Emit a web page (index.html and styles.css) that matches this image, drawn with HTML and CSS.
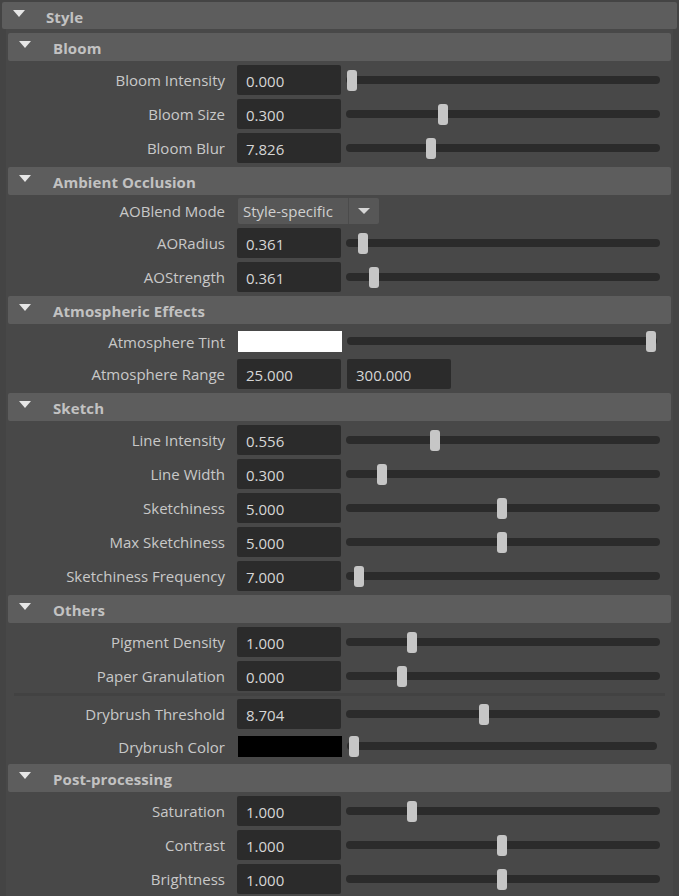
FILE: index.html
```html
<!DOCTYPE html>
<html>
<head>
<meta charset="utf-8">
<link rel="stylesheet" href="styles.css">
</head>
<body>
<div class="panel">
  <div class="hdr top"><span class="tri"></span><span class="ht">Style</span></div>
  <div class="body">
    <div class="hdr"><span class="tri"></span><span class="ht">Bloom</span></div>
    <div class="row"><span class="lbl">Bloom Intensity</span><span class="inp">0.000</span><div class="sl"><div class="track"></div><div class="knob" style="left:1px"></div></div></div>
    <div class="row"><span class="lbl">Bloom Size</span><span class="inp">0.300</span><div class="sl"><div class="track"></div><div class="knob" style="left:92px"></div></div></div>
    <div class="row"><span class="lbl">Bloom Blur</span><span class="inp">7.826</span><div class="sl"><div class="track"></div><div class="knob" style="left:80px"></div></div></div>

    <div class="hdr"><span class="tri"></span><span class="ht">Ambient Occlusion</span></div>
    <div class="row drow"><span class="lbl">AOBlend Mode</span><div class="dd"><span class="ddv">Style-specific</span><span class="dda"><span class="ddt"></span></span></div></div>
    <div class="row"><span class="lbl">AORadius</span><span class="inp">0.361</span><div class="sl"><div class="track"></div><div class="knob" style="left:12px"></div></div></div>
    <div class="row"><span class="lbl">AOStrength</span><span class="inp">0.361</span><div class="sl"><div class="track"></div><div class="knob" style="left:23px"></div></div></div>

    <div class="hdr"><span class="tri"></span><span class="ht">Atmospheric Effects</span></div>
    <div class="row crow"><span class="lbl">Atmosphere Tint</span><span class="sw white"></span><div class="sl csl"><div class="track"></div><div class="knob" style="left:299px"></div></div></div>
    <div class="row"><span class="lbl">Atmosphere Range</span><span class="inp">25.000</span><span class="inp second">300.000</span></div>

    <div class="hdr"><span class="tri"></span><span class="ht">Sketch</span></div>
    <div class="row"><span class="lbl">Line Intensity</span><span class="inp">0.556</span><div class="sl"><div class="track"></div><div class="knob" style="left:84px"></div></div></div>
    <div class="row"><span class="lbl">Line Width</span><span class="inp">0.300</span><div class="sl"><div class="track"></div><div class="knob" style="left:31px"></div></div></div>
    <div class="row"><span class="lbl">Sketchiness</span><span class="inp">5.000</span><div class="sl"><div class="track"></div><div class="knob" style="left:151px"></div></div></div>
    <div class="row"><span class="lbl">Max Sketchiness</span><span class="inp">5.000</span><div class="sl"><div class="track"></div><div class="knob" style="left:151px"></div></div></div>
    <div class="row"><span class="lbl">Sketchiness Frequency</span><span class="inp">7.000</span><div class="sl"><div class="track"></div><div class="knob" style="left:8px"></div></div></div>

    <div class="hdr"><span class="tri"></span><span class="ht">Others</span></div>
    <div class="row"><span class="lbl">Pigment Density</span><span class="inp">1.000</span><div class="sl"><div class="track"></div><div class="knob" style="left:61px"></div></div></div>
    <div class="row"><span class="lbl">Paper Granulation</span><span class="inp">0.000</span><div class="sl"><div class="track"></div><div class="knob" style="left:51px"></div></div></div>
    <div class="sep"></div>
    <div class="row"><span class="lbl">Drybrush Threshold</span><span class="inp">8.704</span><div class="sl"><div class="track"></div><div class="knob" style="left:133px"></div></div></div>
    <div class="row crow"><span class="lbl">Drybrush Color</span><span class="sw black"></span><div class="sl csl"><div class="track"></div><div class="knob" style="left:2px"></div></div></div>

    <div class="hdr"><span class="tri"></span><span class="ht">Post-processing</span></div>
    <div class="row"><span class="lbl">Saturation</span><span class="inp">1.000</span><div class="sl"><div class="track"></div><div class="knob" style="left:61px"></div></div></div>
    <div class="row"><span class="lbl">Contrast</span><span class="inp">1.000</span><div class="sl"><div class="track"></div><div class="knob" style="left:151px"></div></div></div>
    <div class="row"><span class="lbl">Brightness</span><span class="inp">1.000</span><div class="sl"><div class="track"></div><div class="knob" style="left:151px"></div></div></div>
  </div>
</div>
</body>
</html>
```
FILE: styles.css
```css
html, body {
  margin: 0;
  padding: 0;
  background: #444444;
  height: 896px;
  overflow: hidden;
}
.panel {
  font-family: "Open Sans", "Noto Sans", sans-serif;
  font-size: 15px;
  color: #c8c8c8;
  padding-top: 2px;
}
.hdr {
  height: 28px;
  background: #5d5d5d;
  border-radius: 2px;
  display: flex;
  align-items: center;
  position: relative;
  flex-shrink: 0;
}
.hdr.top {
  height: 27px;
  margin: 0 2px;
}
.tri {
  width: 0;
  height: 0;
  border-left: 6.5px solid transparent;
  border-right: 6.5px solid transparent;
  border-top: 7px solid #e6e6e6;
  margin-left: 11px;
  margin-top: -5px;
}
.ht {
  font-weight: bold;
  color: #c2c2c2;
  margin-left: 21px;
  padding-top: 2px;
  letter-spacing: 0.1px;
}
.hdr:not(.top) .ht { margin-left: 22px; }
.body {
  margin: 0 6px;
  background: #484848;
  padding: 4px 2px 0;
  display: flex;
  flex-direction: column;
  gap: 4px;
  height: 880px;
}
.row {
  height: 30px;
  display: flex;
  align-items: center;
  flex-shrink: 0;
}
.lbl {
  width: 217px;
  text-align: right;
  white-space: nowrap;
  margin-right: 12px;
}
.inp {
  width: 104px;
  height: 30px;
  box-sizing: border-box;
  background: #2b2b2b;
  border-radius: 2px;
  padding-left: 9px;
  padding-top: 1px;
  line-height: 30px;
  color: #d6d6d6;
  flex-shrink: 0;
}
.inp.second { margin-left: 6px; }
.sl {
  flex: 1;
  position: relative;
  height: 21px;
  margin-left: 5px;
  margin-right: 11px;
}
.track {
  position: absolute;
  left: 0;
  right: 0;
  top: 6px;
  height: 8px;
  background: #2b2b2b;
  border-radius: 4px;
}
.knob {
  position: absolute;
  top: 0;
  width: 10px;
  height: 21px;
  background: #c6c6c6;
  border-radius: 3px;
}
.crow { height: 27px; }
.sw {
  width: 104px;
  height: 21px;
  margin-left: 1px;
  flex-shrink: 0;
}
.sw.white { background: #ffffff; }
.sw.black { background: #000000; }
.csl { margin-left: 5px; margin-right: 14px; }
.drow {
  height: 26px;
  margin-top: -1px;
}
.dd {
  display: flex;
  height: 26px;
  margin-left: 1px;
  background: #575757;
  border-radius: 2px;
}
.ddv {
  width: 111px;
  box-sizing: border-box;
  padding-left: 5px;
  line-height: 26px;
  color: #d0d0d0;
  border-right: 1px solid #4b4b4b;
}
.dda {
  width: 30px;
  display: flex;
  align-items: center;
  justify-content: center;
}
.ddt {
  width: 0;
  height: 0;
  border-left: 6px solid transparent;
  border-right: 6px solid transparent;
  border-top: 6px solid #d6d6d6;
}
.sep {
  height: 3px;
  margin: -2px 6px -1px 6px;
  background: #424242;
  flex-shrink: 0;
}
```
